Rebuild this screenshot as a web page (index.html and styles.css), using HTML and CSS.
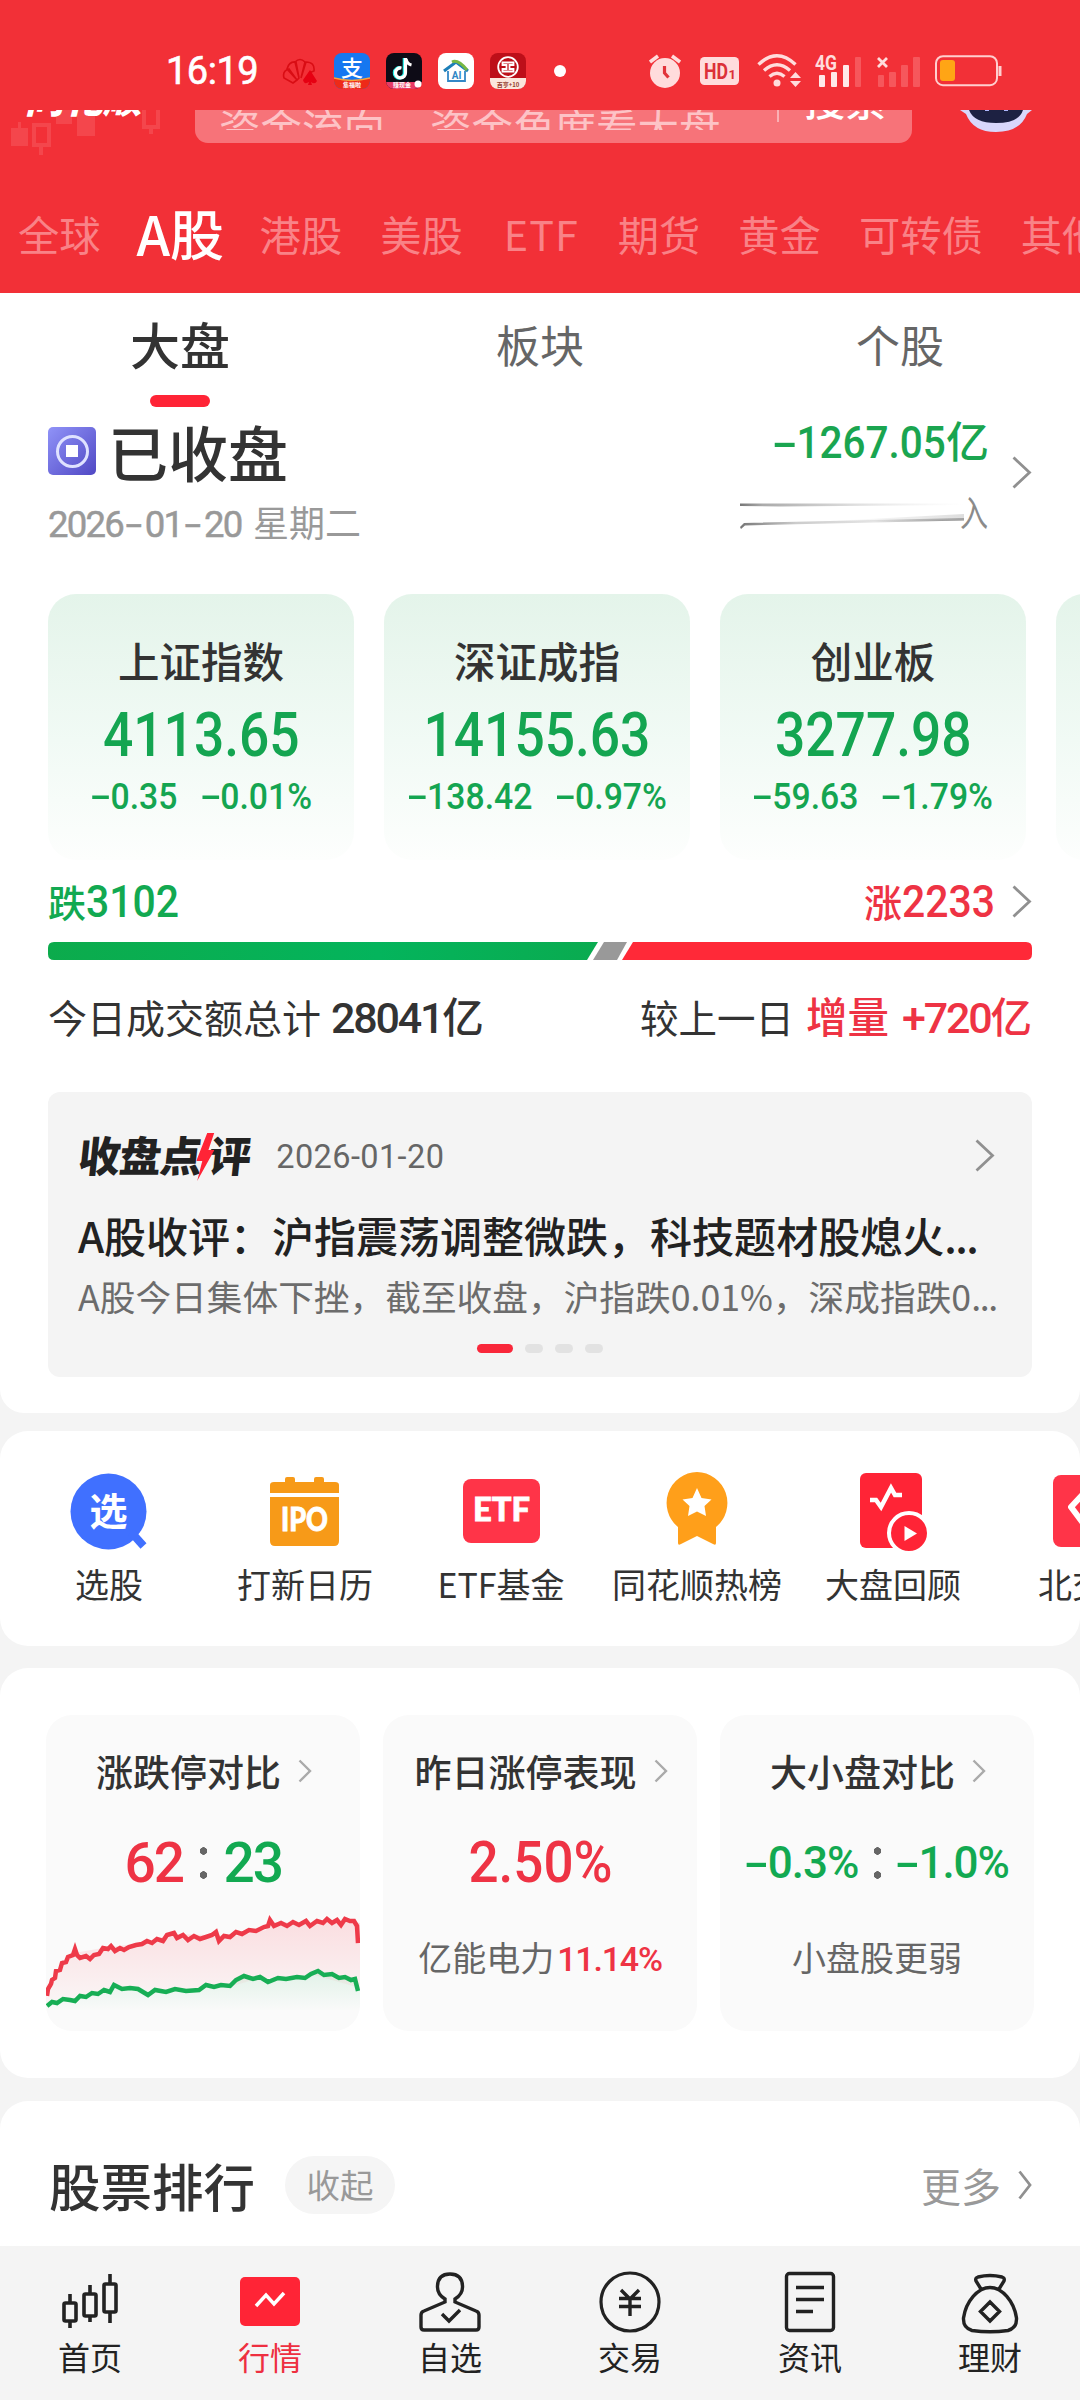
FILE: index.html
```html
<!DOCTYPE html>
<html lang="zh-CN">
<head>
<meta charset="utf-8">
<title>行情</title>
<link rel="stylesheet" href="styles.css">
</head>
<body>
<div class="app">
<header class="top">
  <div class="status">
    <span class="time num">16:19</span>
    <svg class="s-hw" width="36" height="36" viewBox="0 0 36 36"><g fill="none" stroke="#d90d14" stroke-width="1.6"><path d="M11 30 2 25Q0 18 7 16L15 27ZM15 27 5 16Q7 8 14 9L17 25ZM17 25 13 9Q18 4 23 9L19 25M19 25 24 9Q33 9 32 18L27 20"/></g><path d="M28 17 35 28Q33 32 29 29L30 32H26L27 29Q22 32 21 27Z" fill="#e60012"/></svg>
    <svg width="36" height="36" viewBox="0 0 36 36"><defs><clipPath id="rc"><rect width="36" height="36" rx="8"/></clipPath></defs><g clip-path="url(#rc)"><rect width="36" height="36" fill="#1677f0"/><path d="M0 25Q18 30 36 25V36H0Z" fill="#ee2a18"/><path d="M0 25Q18 30 36 25" stroke="#f7a33b" stroke-width="1.5" fill="none"/></g><text x="18" y="22.500" class="ic-zhi">支</text><text x="18" y="34" class="ic-tiny">集福啦</text></svg>
    <svg width="36" height="36" viewBox="0 0 36 36"><g clip-path="url(#rc)"><rect width="36" height="36" fill="#0d0b16"/><path d="M0 29H36V36H0Z" fill="#e83a66"/></g><path d="M18.500 5V19.500A5 5 0 1 1 14.500 15" fill="none" stroke="#25f4ee" stroke-width="3.600"/><path d="M19.500 5V19.500A5 5 0 1 1 15.500 15M20 6Q21 11 25.500 12" fill="none" stroke="#fff" stroke-width="3.200"/><text x="16" y="34" class="ic-tiny">赚现金</text><circle cx="32" cy="31" r="3.500" fill="#fff"/></svg>
    <svg width="36" height="36" viewBox="0 0 36 36"><rect width="36" height="36" rx="8" fill="#fff"/><path d="M6 18 18 9 30 18" fill="none" stroke="#1c7fb8" stroke-width="3"/><path d="M14 9Q20 6 29 17" fill="none" stroke="#77b843" stroke-width="3"/><path d="M10 18V28H27V18" fill="none" stroke="#3388c7" stroke-width="1.800"/><text x="18.500" y="25.500" class="ic-ai">AI</text></svg>
    <svg width="36" height="36" viewBox="0 0 36 36"><g clip-path="url(#rc)"><rect width="36" height="36" fill="#bd0f19"/><path d="M0 25H36V36H0Z" fill="#fbe6dc"/></g><circle cx="18" cy="14" r="9.800" fill="none" stroke="#fff" stroke-width="1.800"/><path d="M12.500 9.500H23.500V12H19.500V16H23.500V18.500H12.500V16H16.500V12H12.500Z" fill="none" stroke="#fff" stroke-width="1.800"/><text x="18" y="33.500" class="ic-tiny ic-dark">百亨+10</text></svg>
    <i class="dot"></i>
    <svg class="s-alarm" width="32" height="36" viewBox="0 0 32 36"><g stroke="#ffdcdc" stroke-width="3.500"><path d="M1 9 9 3M23 3 31 9"/></g><circle cx="16" cy="20" r="15" fill="#ffdcdc"/><path d="M15.500 13V20L19.500 24.500" fill="none" stroke="#e2343b" stroke-width="3.200"/></svg>
    <svg class="s-hd" width="39" height="28" viewBox="0 0 39 28"><rect width="39" height="28" rx="4.500" fill="#ffdcdc"/><text x="4" y="21.500" class="ic-hd" textLength="24" lengthAdjust="spacingAndGlyphs">HD</text><text x="28.500" y="21.500" class="ic-hd1">1</text></svg>
    <svg class="s-wifi" width="45" height="36" viewBox="0 0 45 36"><g fill="none" stroke="#ffdcdc" stroke-width="3.400"><path d="M1.500 11.500Q20 -6 38.500 11.500M7 17.500Q20 6 33 17.500M12.500 23.500Q20 17 27.500 23.500"/></g><circle cx="20" cy="30" r="3.500" fill="#ffdcdc"/><path d="M33 25 38.500 19 44 25ZM33 28H44L38.500 34Z" fill="#ffdcdc"/></svg>
    <svg class="s-sig" width="47" height="34" viewBox="0 0 47 34"><text x="0" y="16" class="ic-4g" textLength="22" lengthAdjust="spacingAndGlyphs">4G</text><g fill="#ffe9e9"><rect x="4" y="21" width="6" height="12" rx="1"/><rect x="16" y="18" width="6" height="15" rx="1"/><rect x="28" y="11" width="6" height="22" rx="1"/></g><rect x="40" y="3" width="6" height="30" rx="1" fill="#f6575c"/></svg>
    <svg class="s-sig2" width="44" height="34" viewBox="0 0 44 34"><path d="M1 4 10 13M10 4 1 13" stroke="#ffdcdc" stroke-width="2.800"/><g fill="#f6575c"><rect x="1" y="21" width="6" height="12" rx="1"/><rect x="12" y="18" width="7" height="15" rx="1"/><rect x="24" y="11" width="7" height="22" rx="1"/><rect x="36" y="3" width="7" height="30" rx="1"/></g></svg>
    <svg class="s-bat" width="67" height="32" viewBox="0 0 67 32"><rect x="1" y="1.200" width="61" height="29" rx="7" fill="none" stroke="#ffcfcf" stroke-width="2"/><rect x="5" y="5" width="15" height="21" rx="3" fill="#ffa515"/><path d="M65 11V21" stroke="#ffcfcf" stroke-width="3"/></svg>
  </div>
  <div class="searchrow">
    <svg class="candles" width="160" height="50" viewBox="0 0 160 50"><g fill="#f4464c"><rect x="11" y="18" width="17" height="18"/><path d="M18 12H21V18H18ZM56 0H72V14H56ZM77 0H95V26H77Z"/></g><g fill="none" stroke="#f4464c" stroke-width="4"><path d="M34 15H49V35H34ZM41 35V45M144 0V17H158V0M151 17V24"/></g></svg>
    <span class="brand">同花顺</span>
    <div class="searchbox"><div class="hint"><span>资金流向</span><span>资金角度看大盘</span></div><i></i><b>搜索</b></div>
    <svg class="bot" width="72" height="24" viewBox="0 0 72 24"><path d="M0 0H72L67 4Q60 22 36 22Q13 22 6 4Z" fill="#d9d7fb"/><path d="M9 0H63Q59 13 36 13Q14 13 9 0Z" fill="#1d2142"/><path d="M25 0h4M44 0h4" stroke="#aeb8ff" stroke-width="2"/></svg>
  </div>
  <nav class="markets"><span>全球</span><span class="on">A股</span><span>港股</span><span>美股</span><span class="etf">ETF</span><span>期货</span><span>黄金</span><span>可转债</span><span>其他</span></nav>
</header>

<main>
<section class="panel overview">
  <div class="subtabs"><span class="on">大盘</span><span>板块</span><span>个股</span></div>
  <div class="closing">
    <div class="state">
      <div class="state-t"><svg width="48" height="48" viewBox="0 0 48 48"><defs><linearGradient id="pg" x1="0" y1="0" x2="1" y2="1"><stop offset="0" stop-color="#9093f8"/><stop offset="1" stop-color="#5048c4"/></linearGradient></defs><rect width="48" height="48" rx="5" fill="url(#pg)"/><circle cx="24.500" cy="24.500" r="15" fill="none" stroke="#dfe2ff" stroke-width="3"/><rect x="18" y="18" width="12" height="12" fill="#fff"/></svg><span>已收盘</span></div>
      <div class="date"><span class="num">2026<u>-</u>01<u>-</u>20</span> 星期二</div>
    </div>
    <div class="flow">
      <div class="flow-v"><span class="num"><u>-</u>1267.05</span>亿</div>
      <div class="smear"><svg width="224" height="36" viewBox="0 0 224 36"><defs><linearGradient id="sa"><stop offset="0" stop-color="#777"/><stop offset=".1" stop-color="#aaa"/><stop offset=".5" stop-color="#ddd"/><stop offset="1" stop-color="#eee" stop-opacity="0"/></linearGradient><linearGradient id="sb"><stop offset="0" stop-color="#777"/><stop offset=".25" stop-color="#ccc"/><stop offset=".6" stop-color="#e4e4e4"/><stop offset="1" stop-color="#888"/></linearGradient><linearGradient id="sc"><stop offset="0" stop-color="#ccc" stop-opacity="0"/><stop offset="1" stop-color="#bbb" stop-opacity=".5"/></linearGradient></defs><path d="M0 9.500H224V11L40 12.500 0 12Z" fill="url(#sa)"/><path d="M0 33 4 29 224 24V26.500L5 31.500 1 35Z" fill="url(#sb)"/><path d="M90 27 224 20V26Z" fill="url(#sc)"/></svg><span>入</span></div>
    </div>
    <svg class="chev" width="20" height="33" viewBox="0 0 20 33"><path d="M1.500 1.500 17.500 16.500 1.500 31.500"/></svg>
  </div>
  <div class="indices">
    <div class="idx"><h3>上证指数</h3><b class="num">4113.65</b><p class="num"><span><u>-</u>0.35</span><span><u>-</u>0.01%</span></p></div>
    <div class="idx"><h3>深证成指</h3><b class="num">14155.63</b><p class="num"><span><u>-</u>138.42</span><span><u>-</u>0.97%</span></p></div>
    <div class="idx"><h3>创业板</h3><b class="num">3277.98</b><p class="num"><span><u>-</u>59.63</span><span><u>-</u>1.79%</span></p></div>
    <div class="idx"></div>
  </div>
  <div class="updown"><span class="down">跌<em class="num">3102</em></span><span class="up">涨<em class="num">2233</em></span><svg class="chev" width="20" height="33" viewBox="0 0 20 33"><path d="M1.500 1.500 17.500 16.500 1.500 31.500"/></svg></div>
  <svg class="ratio" width="984" height="18" viewBox="0 0 984 18"><defs><linearGradient id="gg"><stop offset="0" stop-color="#0cab4c"/><stop offset=".6" stop-color="#04b45c"/><stop offset="1" stop-color="#0aab50"/></linearGradient></defs><path d="M6 0H550L539 18H6Q0 18 0 12V6Q0 0 6 0Z" fill="url(#gg)"/><path d="M556 0H579L569 18H545Z" fill="#999"/><path d="M585 0H978Q984 0 984 6V12Q984 18 978 18H574Z" fill="#ff2938"/></svg>
  <div class="turnover"><span>今日成交额总计</span><strong><em class="num">28041</em>亿</strong><span class="prev">较上一日</span><strong class="up">增量</strong><strong class="up"><em class="num">+720</em>亿</strong></div>
  <article class="news">
    <div class="news-h"><span class="news-logo">收盘点<svg width="17" height="48" viewBox="0 0 17 48"><path d="M8 0H15L11 17H17L3 48 6 28H0Z" fill="#ff2436"/></svg>评</span><time>2026-01-20</time><svg class="chev" width="20" height="33" viewBox="0 0 20 33"><path d="M1.500 1.500 17.500 16.500 1.500 31.500"/></svg></div>
    <h2>A股收评：沪指震荡调整微跌，科技题材股熄火<span>...</span></h2>
    <p>A股今日集体下挫，截至收盘，沪指跌0.01%，深成指跌0<span>...</span></p>
    <div class="pager"><i class="on"></i><i></i><i></i><i></i></div>
  </article>
</section>

<section class="panel menu">
  <div><svg width="80" height="84" viewBox="0 0 80 84"><circle cx="39.500" cy="41.500" r="38" fill="#4070ff"/><path d="M63 78V72L72 61H80V80H63Z" fill="#fff"/><path d="M62 62 74.500 76" stroke="#4070ff" stroke-width="8"/><text x="39.500" y="55" class="ic-xuan">选</text></svg><span>选股</span></div>
  <div><svg width="80" height="84" viewBox="0 0 80 84"><path d="M5 23V15Q5 12 9 12H20V9Q20 7 22 7H28Q30 7 30 9V12H49V9Q49 7 51 7H57Q59 7 59 9V12H70Q74 12 74 15V23ZM5 27H74V71Q74 76 69 76H10Q5 76 5 71Z" fill="#f79a18"/><text x="16" y="61" class="ic-lab" textLength="47" lengthAdjust="spacingAndGlyphs">IPO</text></svg><span>打新日历</span></div>
  <div><svg width="80" height="84" viewBox="0 0 80 84"><rect x="2" y="9" width="77" height="64" rx="8" fill="#ff3448"/><text x="12" y="51" class="ic-lab" textLength="57" lengthAdjust="spacingAndGlyphs">ETF</text></svg><span>ETF基金</span></div>
  <div><svg width="80" height="84" viewBox="0 0 80 84"><path d="M40 2A31 31 0 0 1 59 57V73Q59 76 56 74L40 66 24 74Q21 76 21 73V57A31 31 0 0 1 40 2Z" fill="#ff9f1a"/><path d="M40 18 44.500 28 54.500 29.500 47.500 36 49 46 40 41.500 31 46 32.500 36 25.500 29.500 35.500 28Z" fill="#fff"/></svg><span>同花顺热榜</span></div>
  <div><svg width="80" height="84" viewBox="0 0 80 84"><rect x="7" y="3" width="62" height="75" rx="6" fill="#ff2436"/><path d="M17 30H23L28 37 38 18 42 25H49" fill="none" stroke="#fff" stroke-width="4.500"/><circle cx="56" cy="63" r="20" fill="#ff2436" stroke="#fff" stroke-width="4"/><path d="M51.500 56V71L64 63.500Z" fill="#fff"/></svg><span>大盘回顾</span></div>
  <div><svg width="80" height="84" viewBox="0 0 80 84"><rect x="4" y="5" width="72" height="72" rx="8" fill="#ff3448"/><path d="M22 37 37 21H43L58 37 40 61Z" fill="none" stroke="#fff" stroke-width="6" stroke-linejoin="round"/></svg><span>北交所</span></div>
</section>

<section class="panel compare">
  <div class="cmp"><h4>涨跌停对比<svg class="chev" width="14" height="24" viewBox="0 0 14 24"><path d="M1.500 1.500 12 12 1.500 22.500"/></svg></h4>
    <div class="val v1 num"><span class="up">62</span><i></i><span class="down">23</span></div>
    <svg class="chart" width="314" height="98" viewBox="0 0 314 98"><defs><linearGradient id="cr" x1="0" y1="0" x2="0" y2="1"><stop offset="0" stop-color="#ff2436" stop-opacity=".13"/><stop offset="1" stop-color="#ff2436" stop-opacity=".02"/></linearGradient><linearGradient id="cg" x1="0" y1="0" x2="0" y2="1"><stop offset="0" stop-color="#0cab4c" stop-opacity=".1"/><stop offset="1" stop-color="#0cab4c" stop-opacity="0"/></linearGradient></defs>
    <path d="M0 83 5 68 13 56 20 50 28 40 57 35 88 31 105 28 125 21 165 22 188 23 220 17 224 9 265 10 300 8 314 10V75L268 62 210 66 190 72 150 77 103 79 95 74 65 74 30 86 0 92Z" fill="url(#cr)"/>
    <path d="M0 92 30 84 57 77 65 73 94 74 104 79 152 77 182 72 195 65 250 67 271 60 293 63 308 66 314 77V98H0Z" fill="url(#cg)"/>
    <path d="M1 83 2 76 5 71 6 67 9 65 10 58 14 57 16 50 20 49 22 44 27 42 29 36 31 42 34 45 40 43 44 46 48 42 53 41 57 35 62 36 65 33 69 38 74 35 78 37 83 34 90 32 96 31 101 28 106 30 111 26 117 28 121 22 128 20 131 25 137 22 142 27 148 23 154 26 160 24 166 22 170 19 173 28 178 23 184 24 190 19 196 21 203 17 210 18 218 14 222 13 224 7 228 13 235 10 241 13 247 9 253 12 260 8 264 13 271 8 277 10 281 6 286 10 291 7 295 12 299 6 304 8 308 8 311 13 312 30" fill="none" stroke="#ee3a49" stroke-width="4.500"/>
    <path d="M1 93 6 89 11 90 17 86 24 87 29 88 34 83 40 84 46 80 52 81 58 77 64 79 68 72 76 76 84 75 92 76 97 79 102 82 109 77 120 79 129 76 140 78 153 77 160 72 168 74 175 72 184 73 190 67 198 63 207 66 214 64 222 69 232 65 240 66 251 64 259 65 265 61 272 58 278 62 286 61 293 65 299 64 305 67 309 66 312 78" fill="none" stroke="#17ae55" stroke-width="4.500"/></svg></div>
  <div class="cmp"><h4>昨日涨停表现<svg class="chev" width="14" height="24" viewBox="0 0 14 24"><path d="M1.500 1.500 12 12 1.500 22.500"/></svg></h4>
    <div class="val v2 num up"><span>2.50%</span></div><p>亿能电力<b class="num up">11.14%</b></p></div>
  <div class="cmp"><h4>大小盘对比<svg class="chev" width="14" height="24" viewBox="0 0 14 24"><path d="M1.500 1.500 12 12 1.500 22.500"/></svg></h4>
    <div class="val v3 num down"><span><u>-</u>0.3%</span><i></i><span><u>-</u>1.0%</span></div><p>小盘股更弱</p></div>
</section>

<section class="panel rank"><h1>股票排行</h1><span class="pill">收起</span><span class="more">更多</span><svg class="chev" width="14" height="30" viewBox="0 0 14 30"><path d="M1.500 1.500 12 15 1.500 28.500"/></svg></section>
</main>

<footer class="tabbar">
  <div><svg width="64" height="64" viewBox="0 0 64 64"><g fill="none" stroke="#222" stroke-width="3.600"><rect x="6" y="33" width="12" height="18" rx="1.500"/><rect x="26" y="24" width="12" height="22" rx="1.500"/><rect x="46" y="14" width="12" height="28" rx="1.500"/><path d="M12 24V33M12 51V58M32 15V24M32 46V52M52 4V14M52 42V53"/></g></svg><span>首页</span></div>
  <div class="on"><svg width="64" height="64" viewBox="0 0 64 64"><rect x="2" y="7" width="60" height="49" rx="5" fill="#ff2436"/><path d="M18 36 28 25 36 34 46 23" fill="none" stroke="#fff" stroke-width="3.500"/></svg><span>行情</span></div>
  <div><svg width="64" height="64" viewBox="0 0 64 64"><path d="M27 29Q19 24 19.500 16Q20 4 32 4Q44 4 44.500 16Q45 24 37 29V32L58 41Q61 42 61 45V57Q61 60 58 60H6Q3 60 3 57V45Q3 42 6 41L27 32ZM24 44 31 51 42 40" fill="none" stroke="#222" stroke-width="3.400"/></svg><span>自选</span></div>
  <div><svg width="64" height="64" viewBox="0 0 64 64"><circle cx="32" cy="32" r="29" fill="none" stroke="#222" stroke-width="3.200"/><path d="M23 20 32 29 41 20M32 29V46M21 28.500H43M21 36.500H43" fill="none" stroke="#222" stroke-width="3.400"/></svg><span>交易</span></div>
  <div><svg width="64" height="64" viewBox="0 0 64 64"><rect x="8.500" y="3.500" width="47" height="57" rx="3" fill="none" stroke="#222" stroke-width="3.400"/><path d="M18 17.500H46M18 29.500H46M18 41.500H35" stroke="#222" stroke-width="3.400"/></svg><span>资讯</span></div>
  <div><svg width="64" height="64" viewBox="0 0 64 64"><path d="M23 19 18 11Q17 8 20 7Q32 4 44 7Q47 8 46 11L41 19M32 17.500C20 17.500 8 31 5.500 48Q5 58 14 60.500Q32 63 50 60.500Q59 58 58.500 48C56 31 44 17.500 32 17.500ZM32 32 41.500 41.500 32 51 22.500 41.500Z" fill="none" stroke="#222" stroke-width="3.400"/></svg><span>理财</span></div>
</footer>
</div>
</body>
</html>
```
FILE: styles.css
```css
* { box-sizing: border-box; margin: 0; padding: 0; }
body { background: #f4f4f4; font-family: "Noto Sans CJK SC", sans-serif; color: #333; }
i, em { font-style: normal; }
svg { display: block; flex: none; }
.app { width: 1080px; height: 2400px; overflow: hidden; display: flex; flex-direction: column; }
.num { font-family: Roboto, "Noto Sans CJK SC", sans-serif; font-weight: 500; }
/* wide minus sign in front of figures */
.num u { display: inline-block; text-decoration: none; width: .58em; line-height: 1; text-align: center; letter-spacing: 0; transform: scaleX(1.9); }
.up { color: #ee3344; }
.down { color: #12a951; }
.chev path { fill: none; stroke: #909090; stroke-width: 2.8; }

/* header */
.top { height: 293px; background: #f23037; flex: none; }
.status { height: 110px; display: flex; align-items: center; padding: 32px 0 0 166px; color: #fff; }
.status svg { margin-right: 16px; }
.time { font-size: 38px; width: 116px; white-space: nowrap; line-height: 44px; font-weight: 400; letter-spacing: -.5px; -webkit-text-stroke: .6px #fff; }
.dot { width: 12px; height: 12px; border-radius: 6px; background: #fff; margin: 0 83px 0 12px; }
.status .s-alarm { margin-right: 19px; }
.status .s-hd { margin-right: 18px; }
.status .s-wifi { margin-right: 13px; }
.status .s-sig { margin-right: 15px; }
.status .s-sig2 { margin-right: 14px; }
.ic-zhi { font: 500 22px "Noto Sans CJK SC", sans-serif; fill: #fff; text-anchor: middle; }
.ic-tiny { font: 700 6px "Noto Sans CJK SC", sans-serif; fill: #fff; text-anchor: middle; }
.ic-dark { fill: #96402f; }
.ic-ai { font: 700 10px Roboto, sans-serif; fill: #2f86c5; text-anchor: middle; }
.ic-hd { font: 700 22px Roboto, sans-serif; fill: #dc3038; }
.ic-hd1 { font: 700 13px Roboto, sans-serif; fill: #dc3038; }
.ic-4g { font: 700 20px Roboto, sans-serif; fill: #ffdcdc; }
.ic-xuan { font: 700 38px "Noto Sans CJK SC", sans-serif; fill: #fff; text-anchor: middle; }
.ic-lab { font: 900 32px Lato, sans-serif; fill: #fff; stroke: #fff; stroke-width: .8px; }

.searchrow { height: 75px; display: flex; align-items: flex-start; overflow: hidden; position: relative; }
.candles { position: absolute; left: 0; top: 0; }
.brand { position: relative; width: 195px; padding-left: 25px; margin-top: -36px; font-size: 39px; line-height: 44px; font-weight: 900; font-style: italic; color: #fff; white-space: nowrap; }
.searchbox { width: 717px; height: 33px; background: #f77379; border-radius: 0 0 13px 13px; display: flex; }
.hint { height: 20px; overflow: hidden; width: 582px; padding-left: 24px; display: flex; gap: 45px; font-size: 41.5px; line-height: 60px; color: #fdc3c6; white-space: nowrap; }
.hint span { margin-top: -13px; height: 60px; }
.searchbox i { width: 2px; height: 12px; background: #fab0b4; }
.searchbox b { font-weight: 500; font-size: 41px; line-height: 60px; height: 60px; color: #fff; margin: -42px 0 0 25px; }
.bot { margin-left: 48px; }
.markets { display: flex; gap: 38px; padding-left: 18px; height: 95px; align-items: center; font-size: 41.3px; line-height: 60px; color: #f98287; white-space: nowrap; overflow: hidden; }
.markets .on { color: #fff; font-weight: 500; font-size: 54px; margin: 0 -2px 0 -2px; letter-spacing: -.3px; }
.markets .etf { letter-spacing: 1px; padding: 0 1px 0 3px; }

/* sections */
main { height: 1953px; overflow: hidden; flex: none; }
.panel { background: #fff; border-radius: 28px; overflow: hidden; }
.overview { height: 1120px; border-radius: 0 0 24px 24px; }
.subtabs { display: grid; grid-template-columns: repeat(3, 1fr); height: 116px; padding: 16px 0 0; text-align: center; font-size: 44px; line-height: 70px; color: #666; }
.subtabs .on { font-size: 50px; font-weight: 500; color: #333; display: flex; flex-direction: column; align-items: center; line-height: 68px; }
.subtabs .on::after { content: ""; width: 60px; height: 12px; border-radius: 6px; background: #ff2436; margin-top: 18px; }
.closing { display: flex; height: 185px; padding: 0 48px; }
.state { width: 500px; }
.state-t { display: flex; align-items: center; gap: 12px; height: 82px; font-size: 60px; font-weight: 500; line-height: 84px; }
.state-t svg { margin-top: 1px; }
.state-t span { padding-top: 1px; }
.date { font-size: 36px; line-height: 50px; color: #999; margin-top: 5px; white-space: pre; }
.date .num { display: inline-block; width: 197px; font-size: 36.5px; font-weight: 400; -webkit-text-stroke: .5px #999; letter-spacing: -1.8px; }
.date u { width: .6em; transform: scaleX(1.6); }
.flow { width: 441px; text-align: right; }
.flow-v { color: #1aa550; font-size: 43px; font-weight: 500; line-height: 60px; height: 60px; white-space: nowrap; }
.flow-v .num { font-size: 44px; display: inline-block; transform: scaleX(.92); transform-origin: right; }
.smear { display: flex; justify-content: flex-end; align-items: center; height: 40px; margin-top: 23px; font-size: 36px; line-height: 36px; color: #8b8b8b; }
.smear span { width: 29px; margin: -3px 0 0 -4px; overflow: visible; transform: scaleX(.78); transform-origin: left; }
.closing .chev { margin: 47px 0 0 23px; }
.indices { display: flex; gap: 30px; padding-left: 48px; height: 266px; overflow: hidden; }
.idx { flex: none; width: 306px; border-radius: 28px; background: linear-gradient(#e4f4ea, #f1faf5 55%, #fdfefd); text-align: center; color: #14a551; display: flex; flex-direction: column; align-items: center; }
.idx h3 { font-size: 41.5px; font-weight: 500; color: #333; line-height: 60px; margin-top: 36px; }
.idx b { font-size: 62px; line-height: 70px; margin-top: 10px; transform: scaleX(.86); }
.idx p { display: flex; gap: 25px; font-size: 36.5px; line-height: 44px; margin-top: 5px; transform: scaleX(.925); white-space: nowrap; }
.updown { display: flex; align-items: center; height: 66px; margin-top: 8px; padding: 0 48px; font-size: 38px; font-weight: 500; line-height: 66px; }
.updown em { font-size: 44px; display: inline-block; transform: scaleX(.93); transform-origin: left; margin-right: -7px; }
.updown .up { margin-left: auto; }
.updown .chev { margin-left: 17px; }
.ratio { margin: 8px 48px 0; }
.turnover { display: flex; align-items: baseline; height: 60px; line-height: 60px; padding: 0 48px; margin-top: 25px; font-size: 39px; white-space: nowrap; }
.turnover strong { font-weight: 500; margin-left: 10px; font-size: 41.5px; }
.turnover em { font-size: 43px; letter-spacing: -2.2px; }
.turnover .prev { margin-left: auto; font-size: 38.5px; }
.turnover .prev + .up { margin-left: 12px; }
.turnover .up + .up { margin-left: 13px; }
.news { margin: 47px 48px 0; height: 285px; background: #f4f4f4; border-radius: 12px; padding: 32px 30px 0; white-space: nowrap; }
.news-h { display: flex; align-items: center; height: 62px; }
.news-logo { display: flex; align-items: center; font-size: 42px; line-height: 56px; font-weight: 900; color: #222; transform: skewX(-6deg); letter-spacing: -1.2px; margin: -3px 0 0 1px; }
.news-logo svg { margin: 6px -5px 0 -4px; position: relative; }
.news time { font-family: Roboto, sans-serif; font-size: 32.5px; color: #666; margin: 3px 0 0 26px; letter-spacing: .4px; }
.news .chev { margin-left: auto; margin-right: 7px; }
.news h2 { font-size: 42px; font-weight: 500; color: #222; line-height: 60px; margin-top: 19px; }
.news h2 span, .news p span { letter-spacing: -1.4px; }
.news p { font-size: 35.7px; color: #6c6c6c; line-height: 52px; margin-top: 5px; }
.pager { display: flex; gap: 12px; justify-content: center; margin-top: 22px; }
.pager i { width: 18px; height: 9px; border-radius: 5px; background: #e2e2e2; }
.pager .on { width: 36px; background: #f9273a; }

.menu { height: 215px; margin-top: 18px; display: flex; padding: 40px 0 0 11px; }
.menu div { flex: none; width: 196px; display: flex; flex-direction: column; align-items: center; font-size: 34px; line-height: 50px; white-space: nowrap; color: #333; }
.menu svg { margin-top: -1px; }
.menu span { margin-top: 5px; }

.compare { height: 410px; margin-top: 22px; padding: 47px 46px 0; display: grid; grid-template-columns: repeat(3, 314px); gap: 23px; }
.cmp { height: 316px; border-radius: 26px; background: #fafafa; overflow: hidden; text-align: center; white-space: nowrap; }
.cmp h4 { font-size: 37px; line-height: 56px; font-weight: 500; margin-top: 28px; display: flex; justify-content: center; align-items: center; gap: 17px; padding-left: 2px; }
.cmp .chev path { stroke: #aaa; stroke-width: 2.4; }
.val { height: 70px; line-height: 70px; margin-top: 29px; display: flex; align-items: center; justify-content: center; }
.val i { width: 9px; height: 32px; background: radial-gradient(circle at 50% 4px, #666 0 3.5px, transparent 4px), radial-gradient(circle at 50% 28px, #666 0 3.5px, transparent 4px); }
.v1 { font-size: 55px; gap: 16px; }
.v1 span { width: 58px; letter-spacing: -2px; }
.v2 { font-size: 57px; }
.v2 span { transform: scaleX(.93); }
.v3 { font-size: 44px; gap: 14px; }
.v3 span { letter-spacing: -1px; }
.v3 u { width: .52em; transform: scaleX(1.7); }
.chart { margin-top: 15px; }
.cmp p { font-size: 34px; line-height: 50px; color: #666; margin-top: 34px; }
.cmp p b { font-size: 34px; margin-left: 3px; display: inline-block; letter-spacing: -1.2px; }

.rank { height: 170px; margin-top: 23px; display: flex; align-items: center; padding: 0 48px 2px 49px; line-height: 60px; border-radius: 28px 28px 0 0; }
.rank h1 { font-size: 51.5px; font-weight: 500; }
.pill { width: 110px; height: 58px; line-height: 56px; border-radius: 29px; background: #f5f5f5; color: #999; font-size: 33.5px; text-align: center; margin-left: 30px; }
.more { margin-left: auto; font-size: 40px; color: #999; }
.rank .chev { margin-left: 17px; }

/* bottom tabs */
.tabbar { height: 154px; display: grid; grid-template-columns: repeat(6, 1fr); background: #f4f4f4; padding-top: 24px; flex: none; }
.tabbar div { display: flex; flex-direction: column; align-items: center; font-size: 32px; line-height: 44px; color: #222; }
.tabbar .on { color: #ee2f40; }
```
